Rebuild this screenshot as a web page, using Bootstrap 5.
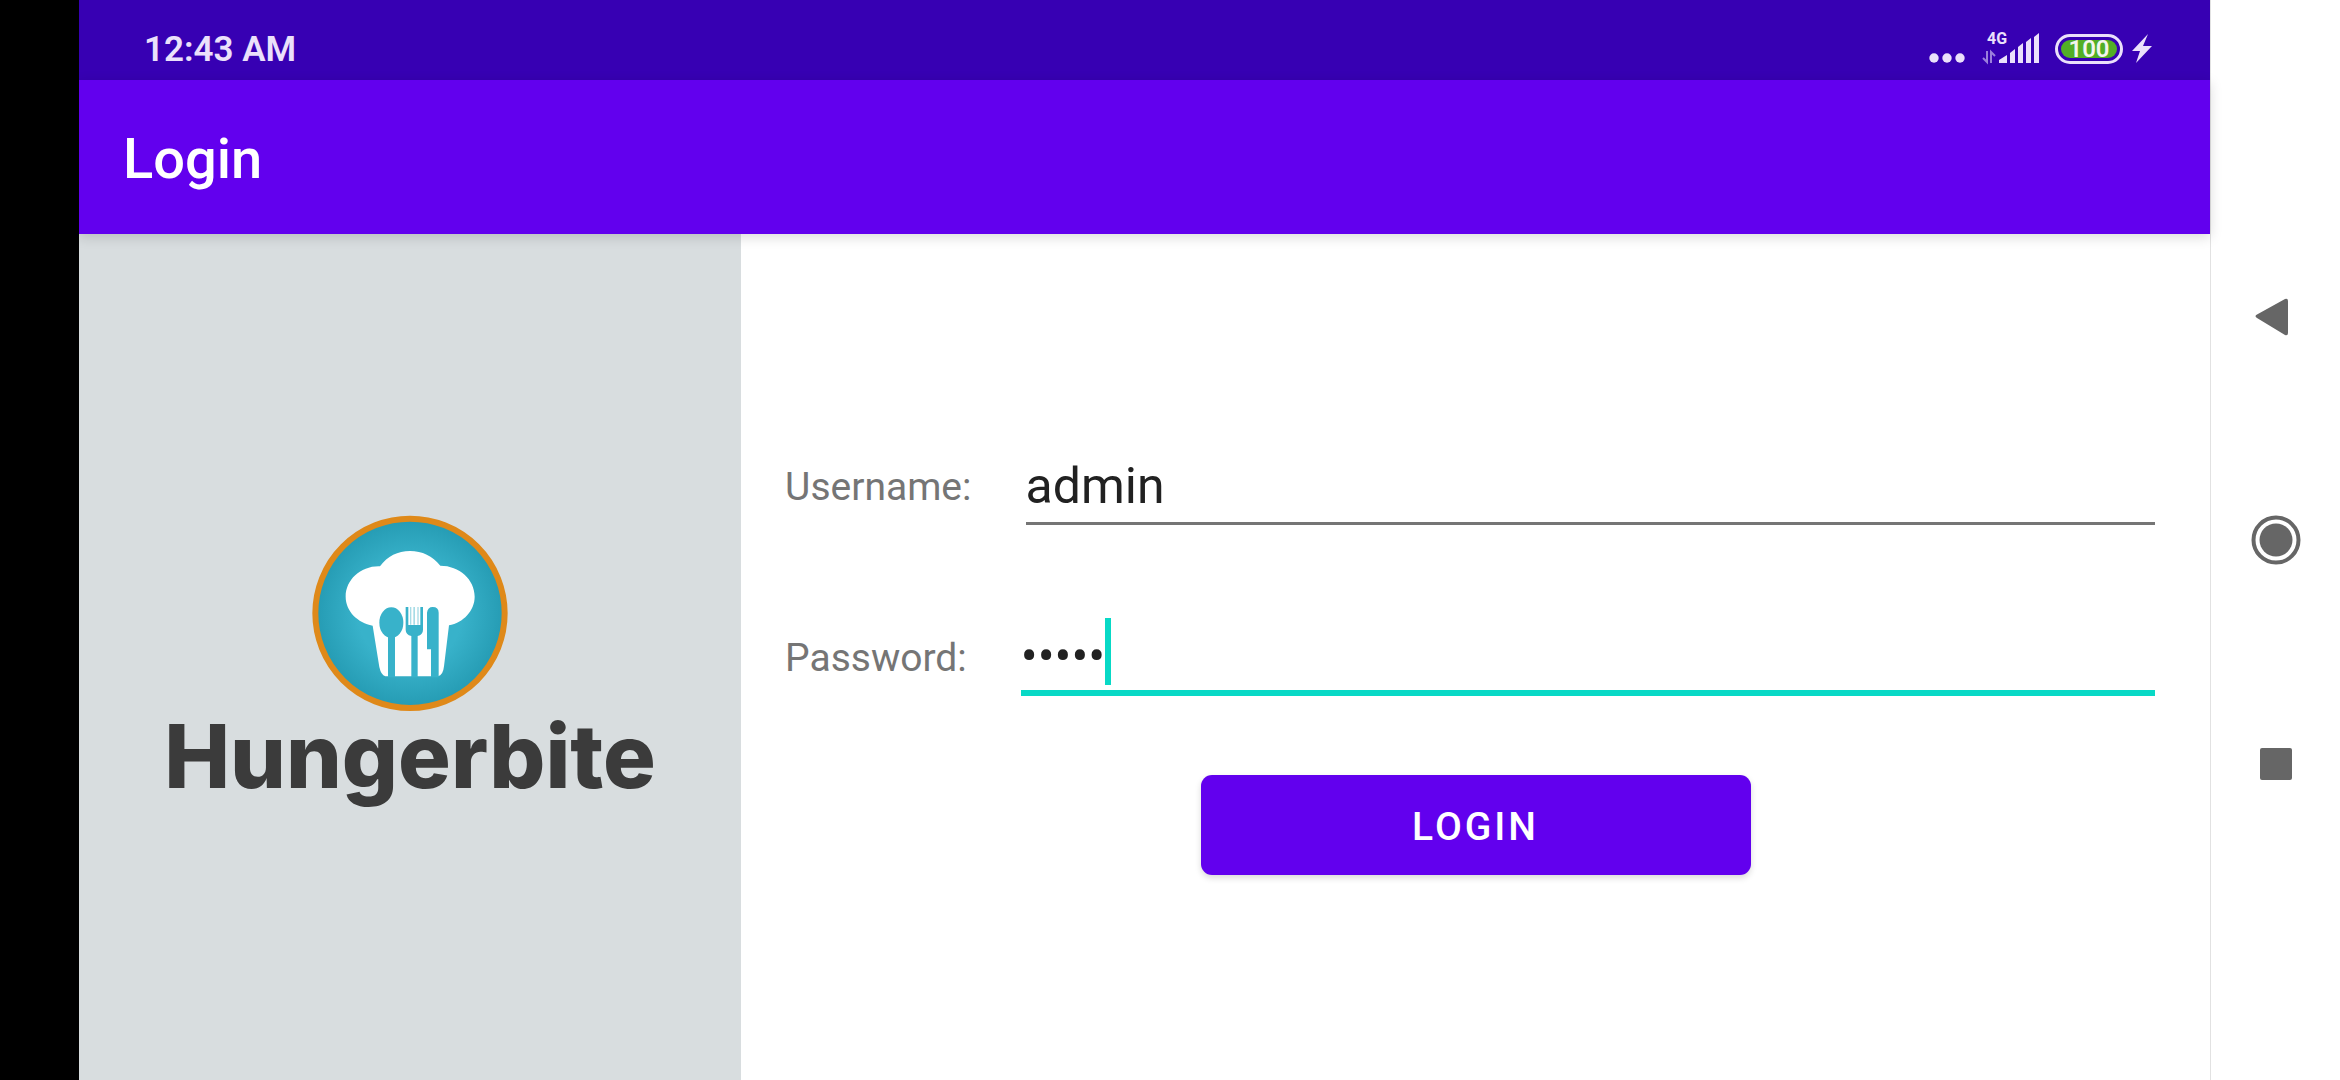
<!DOCTYPE html>
<html lang="en">
<head>
<meta charset="utf-8">
<meta name="viewport" content="width=device-width, initial-scale=1">
<title>Login</title>
<link rel="stylesheet" href="https://cdn.jsdelivr.net/npm/bootstrap@5.3.0/dist/css/bootstrap.min.css">
<style>
body { font-family: Roboto, "Noto Sans", sans-serif; background: #fff; }
.cutout { width: 79px; background: #000; }
.status-bar { height: 80px; padding: 19px 58px 0 65px; background: #3700b3; color: #ebe0fb; }
.clock { font-size: 35px; line-height: 62px; font-weight: 600; }
.network { left: 6px; top: 12px; font-size: 16px; line-height: 16px; font-weight: 700; }
.battery { width: 68px; height: 30px; border: 3px solid #ebe0fb; border-radius: 15px; padding: 3px; margin-top: 15px; }
.battery-level { background: #52ae26; border-radius: 9px; color: #f3f5ee; font-size: 24px; line-height: 18px; font-weight: 600; }
.app-bar { height: 154px; padding: 0 44px; background: #6200ee; color: #fff; box-shadow: 0 3px 12px rgba(0,0,0,.15); z-index: 1; }
.app-title { font-size: 56px; line-height: 64px; font-weight: 500; }
.brand-panel { width: 31.07%; background: #d8dddf; }
.brand-name { color: #3b3b3b; font-family: Inter, "Open Sans", sans-serif; font-weight: 800; font-size: 88px; line-height: 88px; }
.login-form { padding: 8px 44px 0; }
.field-row { gap: 54px; margin-right: 11px; }
.field-label { padding-top: 2px; font-size: 39px; line-height: 48px; color: #757575; }
.field-input, .field-input:focus { height: 78px; padding: 3px 0 0; border: 0; border-bottom: 3px solid #757575; border-radius: 0; background: transparent; box-shadow: none; font-size: 50px; line-height: 60px; color: #212121; }
.field-input.is-current { border-bottom: 6px solid #08d9c6; }
.caret { left: 84px; top: 0; width: 6px; height: 67px; background: #08d9c6; }
.password-row { margin-top: 93px; }
.btn-login { --bs-btn-bg: #6200ee; --bs-btn-color: #fff; --bs-btn-hover-bg: #5300cc; --bs-btn-hover-color: #fff; width: 550px; max-width: 100%; height: 100px; margin-top: 79px; padding: 4px 0 0; border: 0; border-radius: 11px; font-size: 39px; line-height: 48px; font-weight: 500; letter-spacing: 3px; box-shadow: 0 3px 6px rgba(0,0,0,.15); }
.system-nav { width: 130px; border-left: 1px solid #e2e2e2; }
.nav-key { --bs-btn-padding-x: 0; --bs-btn-padding-y: 0; height: 224px; border: 0; border-radius: 0; }
</style>
</head>
<body>
<div class="d-flex vh-100 overflow-hidden">
  <div class="cutout flex-shrink-0"></div>
  <div class="d-flex flex-column flex-grow-1">
    <div class="status-bar d-flex justify-content-between">
      <span class="clock">12:43 AM</span>
      <div class="d-flex align-items-start">
        <svg class="me-3" width="36" height="48" viewBox="0 0 36 48" fill="#ebe0fb" aria-hidden="true"><circle cx="5" cy="39" r="4.700"/><circle cx="18" cy="39" r="4.700"/><circle cx="31" cy="39" r="4.700"/></svg>
        <div class="position-relative me-3">
          <svg width="58" height="48" viewBox="0 0 58 48" fill="#ebe0fb" role="img" aria-label="Signal strength">
            <path d="M18 44v-3l8-5v8zM29 44V34l5-4v14zM37 44V28l5-4v20zM45 44V23l5-4v25zM53 44V18l5-4v30z"/>
            <path d="M2 39l4 4V32M10 44V33l4 4" fill="none" stroke="#9b7fdc" stroke-width="2"/>
          </svg>
          <span class="network position-absolute">4G</span>
        </div>
        <div class="battery"><div class="battery-level text-center">100</div></div>
        <svg class="ms-2" width="21" height="48" viewBox="0 0 21 48" fill="#ebe0fb" aria-hidden="true"><path d="M17 15 1 32h8L5 44 21 27h-9z"/></svg>
      </div>
    </div>
    <header class="app-bar d-flex align-items-center position-relative">
      <h1 class="app-title m-0 pt-1">Login</h1>
    </header>
    <main class="d-flex flex-grow-1">
      <section class="brand-panel d-flex flex-column align-items-center justify-content-center">
        <svg width="196" height="197" viewBox="70 39 588 591" role="img" aria-label="Chef hat with spoon, fork and knife">
          <defs><radialGradient id="disc"><stop offset="0.550" stop-color="#38b2ca"/><stop offset="1" stop-color="#259bb3"/></radialGradient></defs>
          <circle cx="364" cy="334" r="284" fill="url(#disc)" stroke="#df8919" stroke-width="18"/>
          <path fill="#fff" d="M274 193C297 162 327 147 364 147s67 15 91 44c57 0 103 41 103 93 0 42-34 78-77 86l-15 123q-3 28-18 30H290q-13-4-18-28L252 371c-45-9-81-43-81-87 0-51 46-93 103-91z"/>
          <g fill="#38b2ca">
            <ellipse cx="308" cy="362" rx="36" ry="46"/>
            <path d="M298 400h21v126h-21zM351 315h8v54h36v-54h8v68q0 15-16 19v124h-19V402q-17-4-17-19zM415 332q2-17 17-17 18 0 18 17v194h-23v-84h-12z"/>
          </g>
          <path fill="#a7dce6" d="M364 315h4v53h-4zM374 315h5v53h-5zM386 315h4v53h-4z"/>
        </svg>
        <div class="brand-name">Hungerbite</div>
      </section>
      <form class="login-form d-flex flex-column justify-content-center flex-grow-1" onsubmit="return false">
        <div class="field-row d-flex align-items-center">
          <label class="field-label" for="username">Username:</label>
          <div class="flex-grow-1"><input class="field-input form-control" id="username" type="text" value="admin"></div>
        </div>
        <div class="field-row password-row d-flex align-items-center">
          <label class="field-label" for="password">Password:</label>
          <div class="flex-grow-1 position-relative"><input class="field-input is-current form-control" id="password" type="password" value="admin"><span class="caret position-absolute"></span></div>
        </div>
        <button class="btn btn-login align-self-center" type="submit">LOGIN</button>
      </form>
    </main>
  </div>
  <nav class="system-nav d-flex flex-column justify-content-center flex-shrink-0" aria-label="System navigation">
    <button class="nav-key btn" type="button" aria-label="Back"><svg width="50" height="50" viewBox="0 0 50 50" fill="#666"><path d="M6 23.500 34 8q3-1 3 2v32q0 3-3 2L6 27q-3-2 0-3.500z"/></svg></button>
    <button class="nav-key btn" type="button" aria-label="Home"><svg width="50" height="50" viewBox="0 0 50 50"><circle cx="25" cy="25" r="22.500" fill="none" stroke="#666" stroke-width="4"/><circle cx="25" cy="25" r="16.500" fill="#666"/></svg></button>
    <button class="nav-key btn" type="button" aria-label="Recent apps"><svg width="50" height="50" viewBox="0 0 50 50" fill="#666"><rect x="9" y="9" width="32" height="32" rx="2"/></svg></button>
  </nav>
</div>
<script src="https://cdn.jsdelivr.net/npm/bootstrap@5.3.0/dist/js/bootstrap.bundle.min.js"></script>
</body>
</html>
